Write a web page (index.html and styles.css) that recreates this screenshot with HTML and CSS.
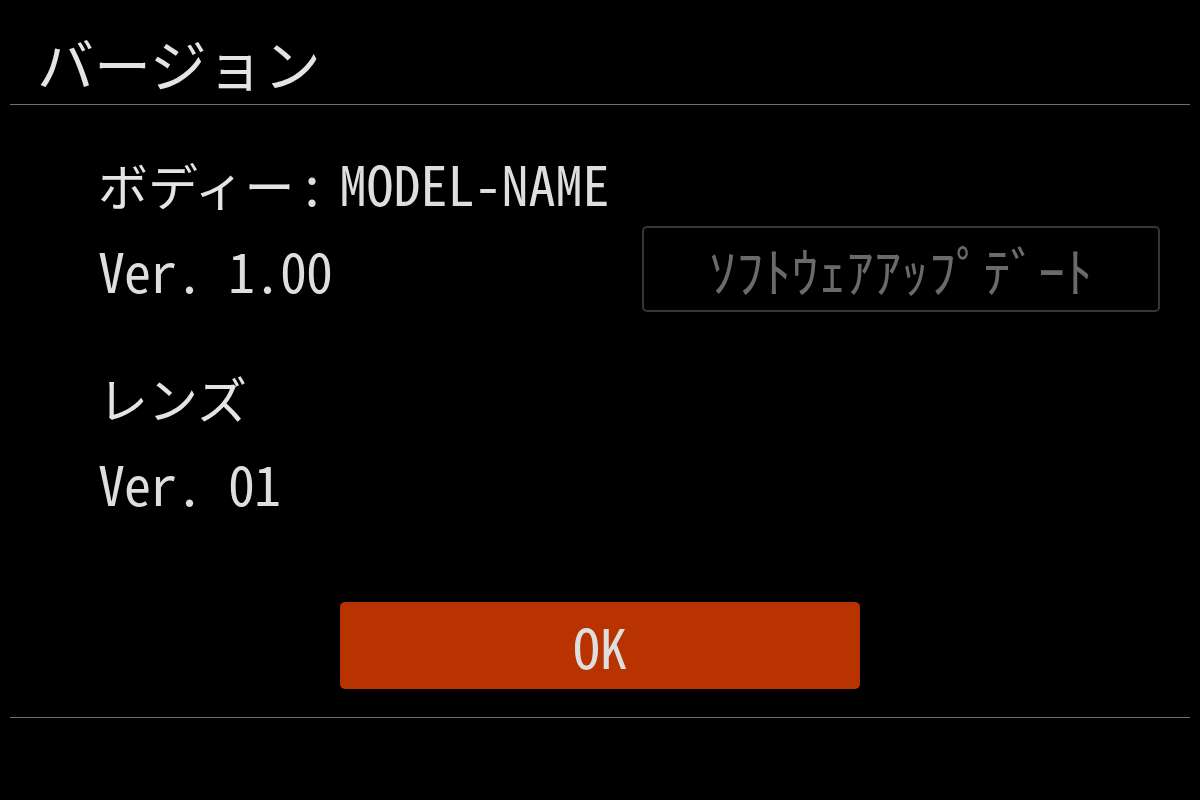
FILE: index.html
```html
<!DOCTYPE html>
<html>
<head>
    <meta charset="utf-8">
    <meta name='viewport' content='width=device-width, initial-scale=1.0'>
    <title>バージョン</title>
    <link rel="stylesheet" href="styles.css">
</head>
<body>
    <div class='screen'>
        <div class='title'>バージョン</div>
        <div class='content'>
            <div class='body-block'>
                <div class='info'>
                    <div class='row'><span class='jp'>ボディー</span><span class='sep'>:</span>MODEL-NAME</div>
                    <div class='row ver'>Ver. 1.00</div>
                </div>
                <div class='update-wrap'>
                    <button class='btn update-btn'>ｿﾌﾄｳｪｱｱｯﾌﾟﾃﾞｰﾄ</button>
                </div>
            </div>
            <div class='lens-block'>
                <div class='row'><span class='jp'>レンズ</span></div>
                <div class='row ver'>Ver. 01</div>
            </div>
            <div class='actions'>
                <button class='btn ok-btn'>OK</button>
            </div>
        </div>
        <div class='bottom-line'></div>
    </div>
</body>
</html>
```

FILE: styles.css
```css
html, body {
    margin: 0;
    padding: 0;
    background-color: #000;
}
body {
    width: 1200px;
    height: 800px;
    overflow: hidden;
    color: #dedede;
    font-family: "Noto Sans Mono CJK JP", "Noto Sans CJK JP", monospace;
}
.screen {
    padding: 0 10px;
}
.title {
    height: 84px;
    padding: 20px 0 0 27px;
    line-height: 84px;
    font-size: 57px;
    font-family: "Noto Sans CJK JP", sans-serif;
    color: #e4e4e4;
    border-bottom: 1px solid #6e6e6e;
}
.content {
    padding: 34px 0 0 88px;
}
.row {
    height: 87px;
    line-height: 87px;
    font-size: 54px;
    white-space: pre;
}
.ver {
    letter-spacing: -1px;
}
.jp {
    font-family: "Noto Sans CJK JP", sans-serif;
    font-size: 50px;
    color: #e4e4e4;
}
.sep {
    margin: 0 14px 0 4px;
}
.body-block {
    display: flex;
}
.info {
    width: 544px;
}
.update-wrap {
    padding-top: 87px;
}
.btn {
    font-family: "Noto Sans Mono CJK JP", "Noto Sans CJK JP", monospace;
    font-size: 54px;
    border-radius: 5px;
    display: flex;
    align-items: center;
    justify-content: center;
    padding: 0;
}
.update-btn {
    width: 518px;
    height: 86px;
    background-color: #000;
    color: #6a6a6a;
    border: 2px solid #363636;
    letter-spacing: 0.5px;
}
.lens-block {
    margin-top: 39px;
}
.actions {
    display: flex;
    padding: 76px 0 0 242px;
}
.ok-btn {
    width: 520px;
    height: 87px;
    background-color: #b83300;
    color: #dedede;
    border: none;
}
.bottom-line {
    margin-top: 28px;
    border-top: 1px solid #6e6e6e;
}
```
